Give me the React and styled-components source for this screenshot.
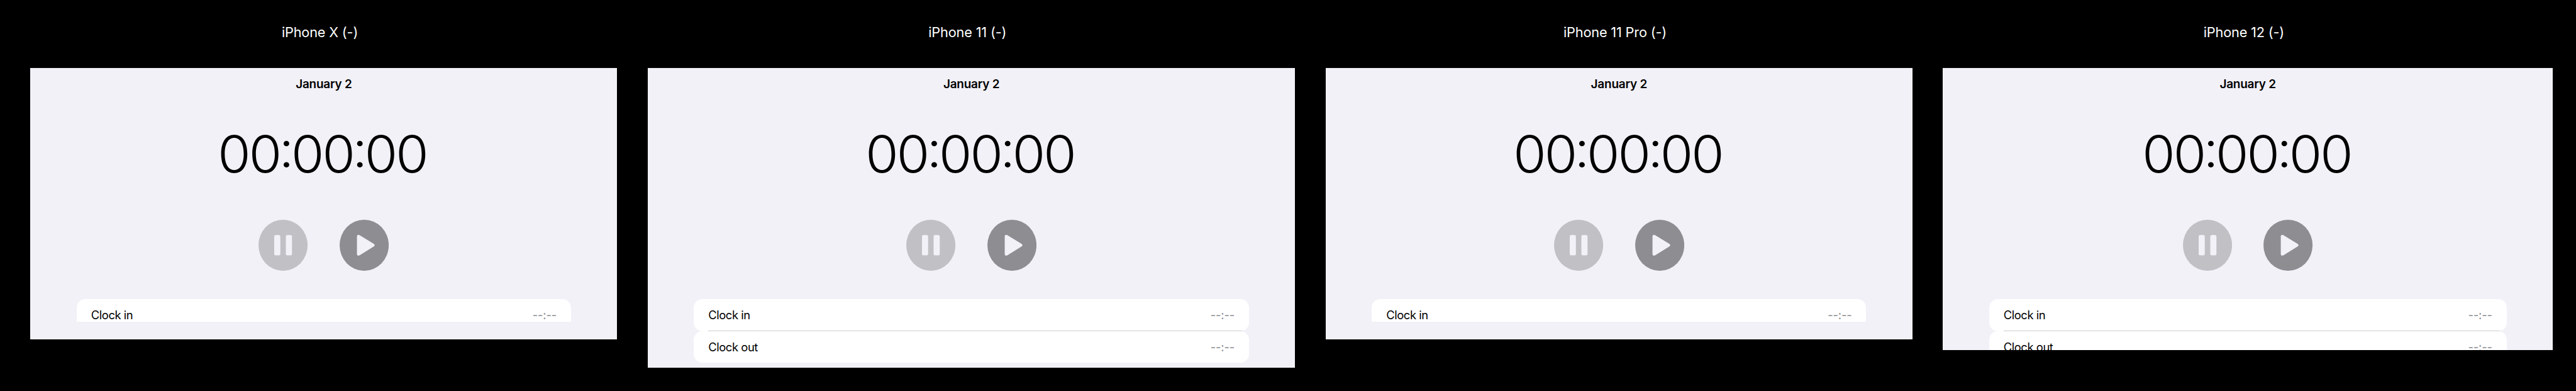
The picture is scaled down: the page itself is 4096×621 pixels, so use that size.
import React from "react";
import styled, { createGlobalStyle } from "styled-components";

const k = 4096 / 7128;
const u = (n) => `${(n * k).toFixed(3)}px`;

const GlobalStyle = createGlobalStyle`
  html, body { margin: 0; background: #000; }
  body { font-family: Inter, "Liberation Sans", sans-serif; overflow: hidden; }
`;

const Board = styled.main`
  display: flex;
  align-items: flex-start;
  gap: ${u(84)};
  width: 4096px;
  height: 621px;
  box-sizing: border-box;
  padding-left: ${u(84)};
  background: #000;
`;

const Device = styled.section`
  flex: none;
  width: ${(p) => u(p.$width)};
`;

const DeviceName = styled.h2`
  margin: 0;
  height: ${u(188)};
  line-height: ${u(178)};
  font-size: ${u(37.8)};
  letter-spacing: ${u(-0.3)};
  font-weight: 400;
  text-align: center;
  color: #fff;
  text-indent: ${u(-22)};
  white-space: pre;
`;

const Screen = styled.div`
  height: ${(p) => u(p.$height)};
  background: #f2f1f7;
  overflow: hidden;
  display: flex;
  flex-direction: column;
  align-items: center;
`;

const DateTitle = styled.h3`
  margin: 0;
  height: ${u(88)};
  line-height: ${u(89)};
  font-size: ${u(33)};
  letter-spacing: ${u(-0.4)};
  font-weight: 600;
  color: #000;
`;

const Timer = styled.div`
  margin: ${u(62)} ${u(7.5)} 0 0;
  height: ${u(176)};
  line-height: ${u(176)};
  font-size: ${u(140)};
  letter-spacing: ${u(-5)};
  font-weight: 300;
  white-space: nowrap;
  color: #000;
  transform: scaleX(1.055);
`;

const Colon = styled.span`
  margin: 0 ${u(-2.5)};
  font-feature-settings: "case";
`;

const Controls = styled.div`
  display: flex;
  gap: ${u(88)};
  margin-top: ${u(92.7)};
`;

const ControlIcon = styled.svg`
  display: block;
  width: ${u(136)};
  height: ${u(141)};
  fill: ${(p) => (p.$dimmed ? "#c1c0c5" : "#8e8d92")};
`;

const List = styled.div`
  flex: none;
  align-self: stretch;
  margin: ${u(79.3)} ${u(128)} 0;
  height: ${(p) => (p.$visible ? u(p.$visible) : "auto")};
  overflow: hidden;
`;

const Row = styled.div`
  display: flex;
  justify-content: space-between;
  height: ${u(88)};
  line-height: ${u(88)};
  box-sizing: border-box;
  padding: 0 ${u(40)};
  border-radius: ${u(24)};
  overflow: hidden;
  background: ${(p) =>
    p.$divided
      ? `linear-gradient(#c6c6c8, #c6c6c8) ${u(40)} 100% / 100% ${u(1.5)} no-repeat #fff`
      : "#fff"};
  font-size: ${u(32)};
  letter-spacing: ${u(-0.75)};
  color: #000;
`;

const Value = styled.span`
  letter-spacing: ${u(-0.35)};
  color: #8a8a8e;
`;

const PauseIcon = () => (
  <ControlIcon $dimmed viewBox="0 0 136 141">
    <ellipse cx="68" cy="70.5" rx="68" ry="70.5" />
    <g fill="#f2f1f7">
      <rect x="43.5" y="42.3" width="17" height="56" rx="4.5" />
      <rect x="75.7" y="42.3" width="17" height="56" rx="4.5" />
    </g>
  </ControlIcon>
);

const PlayIcon = () => (
  <ControlIcon viewBox="0 0 136 141">
    <ellipse cx="68" cy="70.5" rx="68" ry="70.5" />
    <path
      fill="#f2f1f7"
      d="M48 46.500 Q48 41.700 52 41.700 Q54 41.700 56 43 L94.500 66.700 Q97 68.300 97 70.400 Q97 72.500 94.500 74 L56 97.800 Q54 99.100 52 99.100 Q48 99.100 48 94.300 Z"
    />
  </ControlIcon>
);

const devices = [
  { name: "iPhone X (-)", width: 1624, height: 750, visible: 63 },
  { name: "iPhone 11 (-)", width: 1792, height: 828 },
  { name: "iPhone 11 Pro (-)", width: 1624, height: 750, visible: 63 },
  { name: "iPhone 12 (-)", width: 1688, height: 780 },
];

export default function App() {
  return (
    <>
      <GlobalStyle />
      <Board>
        {devices.map((d) => (
          <Device key={d.name} $width={d.width}>
            <DeviceName>{d.name}</DeviceName>
            <Screen $height={d.height}>
              <DateTitle>January 2</DateTitle>
              <Timer>
                00<Colon>:</Colon>00<Colon>:</Colon>00
              </Timer>
              <Controls>
                <PauseIcon />
                <PlayIcon />
              </Controls>
              <List $visible={d.visible}>
                <Row $divided>
                  <span>Clock in</span>
                  <Value>--:--</Value>
                </Row>
                {!d.visible && (
                  <Row>
                    <span>Clock out</span>
                    <Value>--:--</Value>
                  </Row>
                )}
              </List>
            </Screen>
          </Device>
        ))}
      </Board>
    </>
  );
}
